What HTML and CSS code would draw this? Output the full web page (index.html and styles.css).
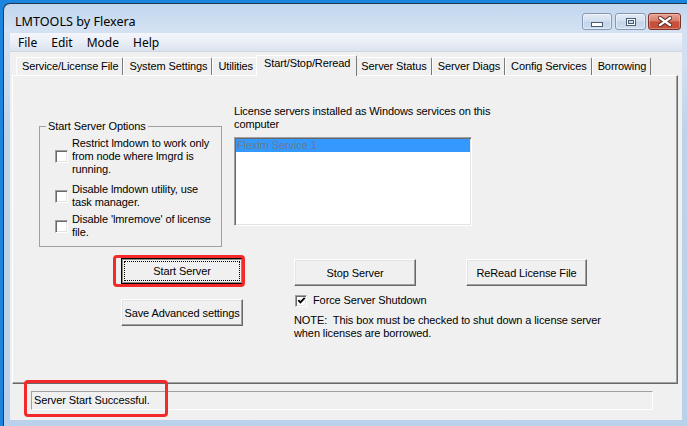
FILE: index.html
```html
<!DOCTYPE html>
<html>
<head>
<meta charset="utf-8">
<title>LMTOOLS by Flexera</title>
<link rel="stylesheet" href="styles.css">
</head>
<body>
<div class="window">
  <div class="titlebar">
    <div class="title">LMTOOLS by Flexera</div>
    <div class="caption">
      <span class="cbtn min"><svg width="12" height="5" viewBox="0 0 12 5"><rect x="0.5" y="0.5" width="11" height="4" fill="#fff" stroke="#4b5b72"/></svg></span>
      <span class="cbtn max"><svg width="10" height="8" viewBox="0 0 10 8"><rect x="0.5" y="0.5" width="9" height="7" fill="#fff" stroke="#4b5b72"/><rect x="2.5" y="2.5" width="5" height="3" fill="#cbdaed" stroke="#4b5b72"/></svg></span>
      <span class="cbtn close"><svg width="14" height="11" viewBox="0 0 14 11"><path d="M2 2 L12 9 M12 2 L2 9" stroke="#5e2a22" stroke-width="4.2" stroke-linecap="square"/><path d="M2 2 L12 9 M12 2 L2 9" stroke="#fff" stroke-width="2.2" stroke-linecap="square"/></svg></span>
    </div>
  </div>
  <div class="menubar">
    <span class="menu">File</span><span class="menu">Edit</span><span class="menu">Mode</span><span class="menu">Help</span>
  </div>
  <div class="content">
    <div class="tabs">
      <span class="tab">Service/License File</span>
      <span class="tab">System Settings</span>
      <span class="tab">Utilities</span>
      <span class="tab active">Start/Stop/Reread</span>
      <span class="tab">Server Status</span>
      <span class="tab">Server Diags</span>
      <span class="tab">Config Services</span>
      <span class="tab">Borrowing</span>
    </div>
    <div class="panel">
      <div class="top">
        <fieldset class="group">
          <legend>Start Server Options</legend>
          <label class="opt opt1"><span class="cb"></span><span>Restrict lmdown to work only<br>from node where lmgrd is<br>running.</span></label>
          <label class="opt opt2"><span class="cb"></span><span>Disable lmdown utility, use<br>task manager.</span></label>
          <label class="opt opt3"><span class="cb"></span><span>Disable 'lmremove' of license<br>file.</span></label>
        </fieldset>
        <div class="services">
          <div class="svc-label">License servers installed as Windows services on this<br>computer</div>
          <div class="listbox"><div class="item sel">Flexlm Service 1</div></div>
        </div>
      </div>
      <div class="actions">
        <div class="col1">
          <button class="btn default">Start Server</button>
          <button class="btn">Save Advanced settings</button>
        </div>
        <div class="col2">
          <div class="btnrow">
            <button class="btn">Stop Server</button>
            <button class="btn reread">ReRead License File</button>
          </div>
          <label class="check"><span class="cb checked"><svg width="9" height="9" viewBox="0 0 9 9"><path d="M1.3 4.2 L3.4 6.4 L7.7 1.8" fill="none" stroke="#000" stroke-width="1.9"/></svg></span><span>Force Server Shutdown</span></label>
          <div class="note">NOTE:&nbsp; This box must be checked to shut down a license server<br>when licenses are borrowed.</div>
        </div>
      </div>
    </div>
    <div class="status">Server Start Successful.</div>
  </div>
</div>
<div class="annot annot-start"></div>
<div class="annot annot-status"></div>
</body>
</html>
```
FILE: styles.css
```css
* { box-sizing: border-box; }
html, body { margin: 0; padding: 0; }
body {
  position: relative;
  width: 687px;
  height: 426px;
  overflow: hidden;
  background: #1a84df;
  font-family: "Liberation Sans", Arial, sans-serif;
  font-size: 11px;
  letter-spacing: -0.1px;
  color: #000;
}
.window {
  margin: 3px 0 0 3px;
  width: 684px;
  height: 423px;
  border-left: 1px solid #22354f;
  border-top: 1px solid #22354f;
  border-top-left-radius: 7px;
  padding: 0 5px 6px 6px;
  background: linear-gradient(#c2d6ee 0, #d3e1f2 26px, #d0dff1 60px, #bdd3eb 130px, #b9d1ea 100%);
  display: flex;
  flex-direction: column;
}
.titlebar {
  height: 29px;
  display: flex;
  align-items: flex-start;
}
.title {
  flex: 1;
  font-family: "Noto Sans", "Open Sans", sans-serif;
  font-size: 12.6px;
  letter-spacing: 0;
  line-height: 16px;
  padding: 10px 0 0 5px;
  color: #000;
}
.caption {
  display: flex;
  margin-top: 9px;
  margin-right: 1px;
}
.cbtn {
  height: 17px;
  border: 1px solid #8399b6;
  border-radius: 3px;
  display: flex;
  align-items: center;
  justify-content: center;
  background: linear-gradient(#e3ecf7 0%, #d2dfef 48%, #c3d4e9 52%, #cfddef 100%);
  box-shadow: inset 0 0 0 1px rgba(255,255,255,0.45);
}
.cbtn.min { width: 30px; padding-top: 5px; }
.cbtn.max { width: 31px; margin-left: 3px; }
.cbtn.close {
  width: 33px;
  margin-left: 2px;
  border-color: #7a3428;
  background: linear-gradient(#e6a294 0%, #d9806e 45%, #c8503d 52%, #c4503c 100%);
  box-shadow: inset 0 0 0 1px rgba(255,220,210,0.35);
}
.menubar {
  height: 19px;
  display: flex;
  align-items: center;
  padding-left: 1px;
  background: linear-gradient(#f4f6fb, #e9eef7 50%, #dce3ef);
  border-bottom: 1px solid #d0d6e0;
  font-family: "Noto Sans", "Open Sans", sans-serif;
  font-size: 12px;
  letter-spacing: 0;
}
.menu { padding: 1px 7px 0; line-height: 16px; }
.content {
  flex: 1;
  background: #f0f0f0;
  display: flex;
  flex-direction: column;
}
.tabs {
  height: 23px;
  display: flex;
  align-items: flex-end;
  padding-left: 6px;
}
.tab {
  height: 18px;
  line-height: 17px;
  padding: 0 4px 0 5px;
  border: 1px solid #fff;
  border-right-color: #7a7a7a;
  border-bottom: none;
  border-radius: 2px 2px 0 0;
  white-space: nowrap;
}
.tab.active {
  position: relative;
  z-index: 1;
  height: 21px;
  margin: 0 -2px -1px;
  padding: 1px 6px 0 7px;
  line-height: 13px;
  background: #f0f0f0;
}
.panel {
  margin-left: 2px;
  width: 666px;
  height: 309px;
  border-top: 1px solid #fff;
  border-left: 1px solid #fff;
  border-right: 1px solid #696969;
  border-bottom: 1px solid #696969;
  box-shadow: inset -1px -1px 0 #a0a0a0;
}
.top {
  display: flex;
  align-items: flex-start;
}
.group {
  margin: 44px 0 0 26px;
  width: 183px;
  min-width: 0;
  height: 127px;
  padding: 0 3px 0 15px;
  border: 1px solid #a0a0a0;
}
.group legend {
  margin-left: -9px;
  padding: 0 2px;
  line-height: 13px;
}
.opt {
  display: flex;
  align-items: center;
  gap: 4px;
  line-height: 13px;
}
.opt1 { margin-top: 4px; }
.opt2 { margin-top: 7px; }
.opt3 { margin-top: 4px; }
.cb {
  flex: none;
  width: 13px;
  height: 13px;
  background: #fff;
  border: 1px solid;
  border-color: #a0a0a0 #fff #fff #a0a0a0;
  box-shadow: inset 1px 1px 0 #696969, inset -1px -1px 0 #e3e3e3;
  display: flex;
  align-items: center;
  justify-content: center;
}
.services { margin: 29px 0 0 12px; }
.svc-label { line-height: 13px; }
.listbox {
  margin-top: 6px;
  width: 238px;
  height: 89px;
  background: #fff;
  padding: 1px;
  border: 1px solid;
  border-color: #a0a0a0 #fff #fff #a0a0a0;
  box-shadow: inset 1px 1px 0 #696969, inset -1px -1px 0 #e3e3e3;
}
.item {
  height: 13px;
  line-height: 13px;
  padding-left: 1px;
  white-space: nowrap;
}
.item.sel { background: #3399ff; color: #6b7a8e; }
.actions {
  display: flex;
  align-items: flex-start;
  gap: 51px;
  margin-top: 11px;
  padding-left: 108px;
}
.col1 {
  display: flex;
  flex-direction: column;
  gap: 15px;
}
.btn {
  width: 122px;
  height: 27px;
  padding: 0;
  background: #f0f0f0;
  font: inherit;
  letter-spacing: inherit;
  color: #000;
  border: 1px solid;
  border-color: #fff #696969 #696969 #fff;
  box-shadow: inset -1px -1px 0 #a0a0a0, inset 1px 1px 0 #e3e3e3;
}
.btn.default {
  height: 26px;
  border-color: #000;
  box-shadow: inset 0 0 0 1px #8d8d8d;
  outline: 1px dotted #000;
  outline-offset: -4px;
}
.btn.reread { width: 121px; }
.col2 { padding-top: 1px; }
.btnrow {
  display: flex;
  gap: 50px;
}
.check {
  margin-top: 8px;
  padding-left: 1px;
  display: flex;
  align-items: center;
  gap: 6px;
  line-height: 13px;
}
.check .cb { width: 12px; height: 12px; }
.note {
  margin-top: 7px;
  line-height: 13px;
  white-space: nowrap;
}
.status {
  margin: 7px 0 0 21px;
  width: 622px;
  height: 19px;
  padding-left: 2px;
  line-height: 17px;
  border: 1px solid;
  border-color: #a0a0a0 #fff #fff #a0a0a0;
}
.annot {
  position: absolute;
  border: 3px solid #f42a2a;
  border-radius: 4px;
}
.annot-start { left: 113px; top: 255px; width: 132px; height: 32px; }
.annot-status { left: 24px; top: 380px; width: 144px; height: 37px; }
```
